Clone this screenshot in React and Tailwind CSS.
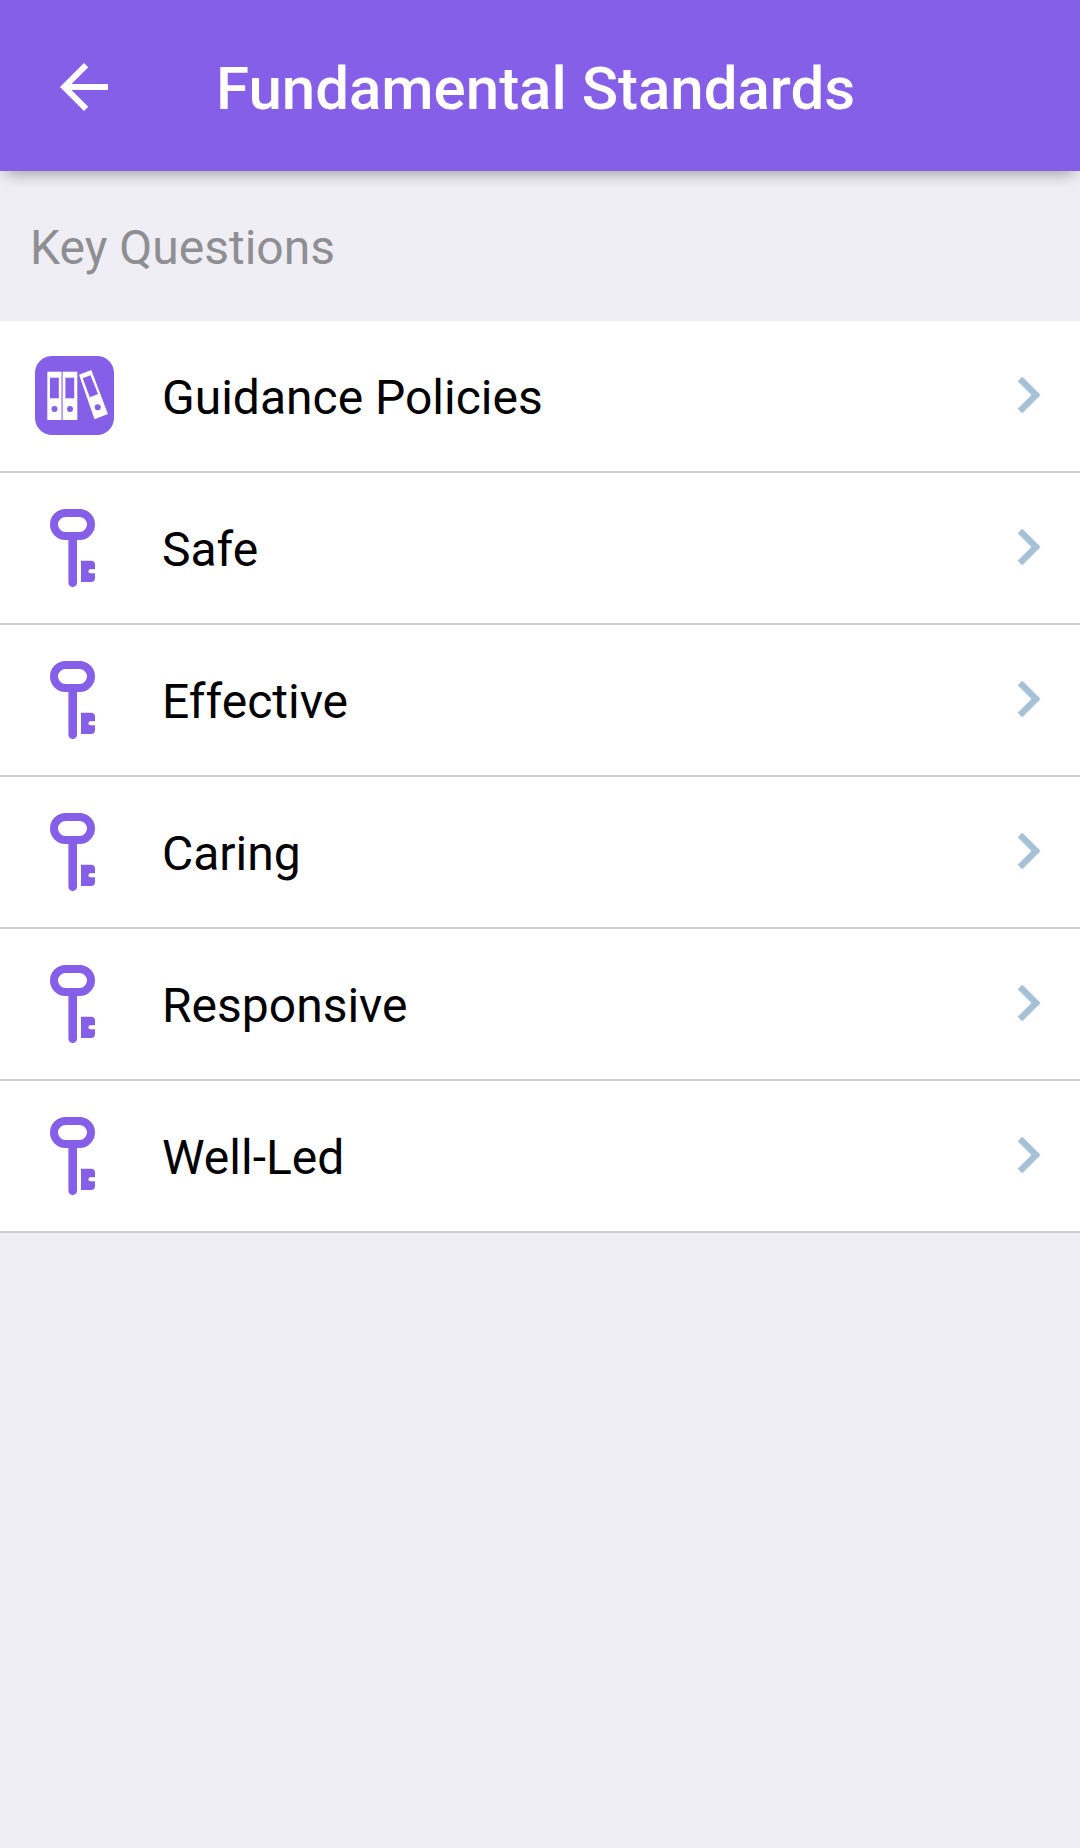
import { useState } from 'react'

const questions = [
  { id: 'guidance-policies', label: 'Guidance Policies', icon: 'binders' },
  { id: 'safe', label: 'Safe', icon: 'key' },
  { id: 'effective', label: 'Effective', icon: 'key' },
  { id: 'caring', label: 'Caring', icon: 'key' },
  { id: 'responsive', label: 'Responsive', icon: 'key' },
  { id: 'well-led', label: 'Well-Led', icon: 'key' },
]

function BackIcon() {
  return (
    <svg viewBox="0 0 24 24" className="w-[72px] h-[72px]" fill="currentColor" aria-hidden="true">
      <path d="M20 11H7.83l5.59-5.59L12 4l-8 8 8 8 1.41-1.41L7.83 13H20v-2z" />
    </svg>
  )
}

function BindersIcon() {
  return (
    <svg viewBox="0 0 78 78" className="w-[78px] h-[78px] shrink-0 overflow-visible" aria-hidden="true">
      <rect y="-1" width="79" height="79" rx="17" fill="#855fe8" />
      <g fill="#fff">
        <rect x="12.3" y="14.7" width="14.2" height="48.3" />
        <rect x="27.6" y="14.7" width="14.7" height="48.3" />
        <path d="M44 17.7 56.3 13 72.9 57 59.5 62.3z" />
      </g>
      <g fill="#855fe8">
        <rect x="15" y="20.7" width="8.8" height="20.6" />
        <rect x="30.4" y="20.7" width="8.8" height="20.6" />
        <path d="M47.7 21.3 55.5 18.3 63 37 54.8 40.3z" />
        <circle cx="19.5" cy="52" r="3" />
        <circle cx="35" cy="52" r="3" />
        <circle cx="62.7" cy="50.3" r="3" />
      </g>
    </svg>
  )
}

function KeyIcon() {
  return (
    <svg viewBox="0 0 78 78" className="w-[78px] h-[78px] shrink-0" aria-hidden="true">
      <rect x="19" y="4" width="37" height="23" rx="11.5" fill="none" stroke="#855fe8" strokeWidth="8" />
      <path d="M37.7 29v44.7" stroke="#855fe8" strokeWidth="8.6" strokeLinecap="round" />
      <path d="M46 51.7h10a4 4 0 0 1 4 4v4.6h-4.6a2 2 0 0 0 0 4H60V69a4 4 0 0 1-4 4H46z" fill="#855fe8" />
    </svg>
  )
}

function Chevron() {
  return (
    <svg viewBox="0 0 24 38" className="w-6 h-[38px] shrink-0" aria-hidden="true">
      <path d="M3 2 19 18 3 34" fill="none" stroke="#a6c0d5" strokeWidth="6.5" />
    </svg>
  )
}

export default function FundamentalStandards() {
  const [selected, setSelected] = useState(null)

  return (
    <div className="min-h-screen bg-[#efeef4] font-['Roboto',sans-serif]">
      <header className="relative flex items-center bg-[#855fe8] text-white px-12 pt-[51px] pb-12 shadow-[0_9px_14px_-6px_rgba(0,0,0,0.33)]">
        <button type="button" aria-label="Back" onClick={() => setSelected(null)} className="shrink-0">
          <BackIcon />
        </button>
        <h1 className="ml-24 pt-1 text-[60px] leading-[68px] font-medium">Fundamental Standards</h1>
      </header>

      <main>
        <h2 className="px-[30px] pt-[49px] pb-[45px] text-5xl leading-[56px] text-[#8e8e93]">Key Questions</h2>

        <ul className="bg-white">
          {questions.map(q => (
            <li key={q.id} className="border-b-2 border-[#cecdd0]">
              <a
                href={`#${q.id}`}
                onClick={() => setSelected(q.id)}
                aria-current={selected === q.id ? 'true' : undefined}
                className="flex items-center pl-[35px] pr-[39px] py-9 text-black"
              >
                {q.icon === 'binders' ? <BindersIcon /> : <KeyIcon />}
                <span className="flex-1 ml-[49px] pt-1 text-5xl leading-[56px]">{q.label}</span>
                <Chevron />
              </a>
            </li>
          ))}
        </ul>
      </main>
    </div>
  )
}
